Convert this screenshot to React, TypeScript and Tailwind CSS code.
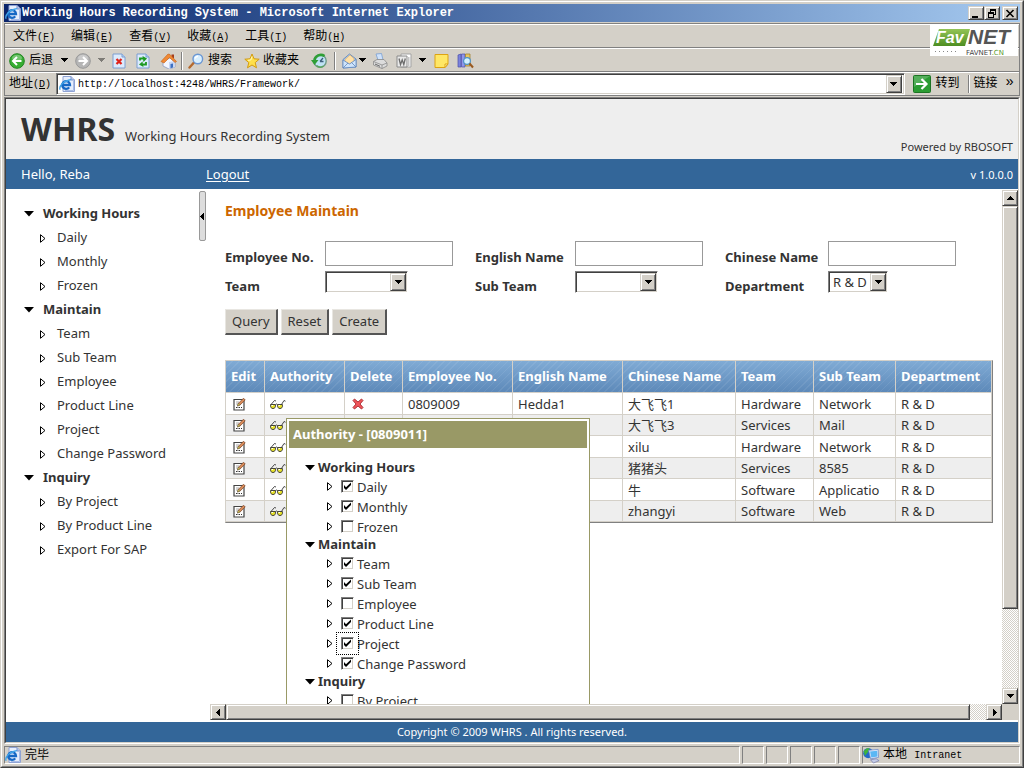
import { useState, type ReactNode } from 'react';

const FONT = 'font-["Noto_Sans","Noto_Sans_CJK_SC",sans-serif]';
const CHROME_FONT = 'font-["Liberation_Mono","Noto_Sans_CJK_SC",monospace]';

const RAISED =
  'border border-t-[#d4d0c8] border-l-[#d4d0c8] border-r-[#404040] border-b-[#404040] bg-[#d4d0c8] shadow-[inset_1px_1px_0_#fff,inset_-1px_-1px_0_#808080]';
const SUNKEN =
  'border border-t-[#808080] border-l-[#808080] border-r-white border-b-white bg-white shadow-[inset_1px_1px_0_#404040,inset_-1px_-1px_0_#d4d0c8]';
const DITHER = 'bg-[repeating-conic-gradient(#fff_0_25%,#d4d0c8_0_50%)] bg-[length:2px_2px]';

const MENUS = [
  ['文件', 'F'],
  ['编辑', 'E'],
  ['查看', 'V'],
  ['收藏', 'A'],
  ['工具', 'T'],
  ['帮助', 'H'],
];

const NAV = [
  { title: 'Working Hours', items: ['Daily', 'Monthly', 'Frozen'] },
  { title: 'Maintain', items: ['Team', 'Sub Team', 'Employee', 'Product Line', 'Project', 'Change Password'] },
  { title: 'Inquiry', items: ['By Project', 'By Product Line', 'Export For SAP'] },
];

const PERMISSIONS = [NAV[0], NAV[1], { title: 'Inquiry', items: ['By Project'] }];

const COLUMNS = [
  { label: 'Edit', width: 'w-[39px]' },
  { label: 'Authority', width: 'w-[80px]' },
  { label: 'Delete', width: 'w-[58px]' },
  { label: 'Employee No.', width: 'w-[110px]' },
  { label: 'English Name', width: 'w-[110px]' },
  { label: 'Chinese Name', width: 'w-[113px]' },
  { label: 'Team', width: 'w-[78px]' },
  { label: 'Sub Team', width: 'w-[82px]' },
  { label: 'Department', width: '' },
];

const EMPLOYEES = [
  { no: '0809009', en: 'Hedda1', cn: '大飞飞1', team: 'Hardware', sub: 'Network' },
  { no: '', en: '', cn: '大飞飞3', team: 'Services', sub: 'Mail' },
  { no: '', en: '', cn: 'xilu', team: 'Hardware', sub: 'Network' },
  { no: '', en: '', cn: '猪猪头', team: 'Services', sub: '8585' },
  { no: '', en: '', cn: '牛', team: 'Software', sub: 'Applicatio' },
  { no: '', en: '', cn: 'zhangyi', team: 'Software', sub: 'Web' },
];

/* ---------- icons ---------- */

function Arrow({ dir }: { dir: 'up' | 'down' | 'left' | 'right' }) {
  const d = {
    up: 'M0 5h7L3.5 1z',
    down: 'M0 1h7L3.5 5z',
    left: 'M5 0v7L1 3.5z',
    right: 'M2 0v7l4-3.5z',
  }[dir];
  return (
    <svg width="7" height="7" viewBox="0 0 7 7" className="shrink-0" aria-hidden="true">
      <path d={d} fill="#000" shapeRendering="crispEdges" />
    </svg>
  );
}

function OpenArrow() {
  return (
    <svg width="10" height="6" viewBox="0 0 10 6" className="shrink-0" aria-hidden="true">
      <path d="M0 0h10L5 5.5z" fill="#000" />
    </svg>
  );
}

function ClosedArrow() {
  return (
    <svg width="6" height="9" viewBox="0 0 6 9" className="shrink-0" aria-hidden="true">
      <path d="M.5 .7v7.6L5 4.5z" fill="#fff" stroke="#000" />
    </svg>
  );
}

function IEIcon() {
  return (
    <svg width="16" height="16" viewBox="0 0 16 16" className="shrink-0" aria-hidden="true">
      <path d="M4 .5h8L15.500 4v11.500H4z" fill="#e6eefc" stroke="#8fa3d4" />
      <path d="M12 .5V4h3.500" fill="#b5c8ee" stroke="#7f93c9" />
      <path d="M14.500 5v9.500H6" fill="none" stroke="#a9bce6" />
      <path d="M3.200 9h7.800a3.900 3.900 0 1 0-.8 2.400" fill="none" stroke="#1668c4" strokeWidth="2.300" />
      <path d="M4 7c1-1.600 3-2.200 4.600-1.600" fill="none" stroke="#6cc3f7" strokeWidth=".9" />
      <path d="M1.200 13.800C-.6 10.500 4.500 4.500 12 3.600" fill="none" stroke="#3fa3e8" strokeWidth="1.300" />
    </svg>
  );
}

function CircleArrowIcon({ forward }: { forward?: boolean }) {
  return (
    <svg width="16" height="16" viewBox="0 0 16 16" className="shrink-0" aria-hidden="true">
      <circle cx="8" cy="8" r="7.300" fill={forward ? '#b5b5b5' : '#37ad32'} stroke={forward ? '#999' : '#1f8420'} />
      <ellipse cx="8" cy="4.800" rx="5" ry="3" fill="#fff" opacity=".3" />
      <path
        d={forward ? 'M3.500 8h8M8 4l4 4-4 4' : 'M12.500 8h-8M8 4L4 8l4 4'}
        fill="none"
        stroke="#fff"
        strokeWidth="2"
      />
    </svg>
  );
}

function PageIcon({ children }: { children: ReactNode }) {
  return (
    <svg width="14" height="16" viewBox="0 0 14 16" className="shrink-0" aria-hidden="true">
      <path d="M1 1h9l3 3v11H1z" fill="#dcebfd" stroke="#7d9ed0" />
      <path d="M10 1v3h3" fill="#b9d0f2" stroke="#7d9ed0" />
      {children}
    </svg>
  );
}

function StopIcon() {
  return (
    <PageIcon>
      <path d="M4.500 6l5 5M9.500 6l-5 5" stroke="#e0231a" strokeWidth="2.200" />
    </PageIcon>
  );
}

function RefreshIcon() {
  return (
    <PageIcon>
      <path d="M4 7.500V5.500h3" fill="none" stroke="#1d9a22" strokeWidth="1.800" />
      <path d="M6.500 3l4.500 2.500L7.500 9z" fill="#1d9a22" />
      <path d="M10 9v2.500H7" fill="none" stroke="#1d9a22" strokeWidth="1.800" />
      <path d="M7.500 14L3 11.500 6.500 8.500z" fill="#1d9a22" />
    </PageIcon>
  );
}

function HomeIcon() {
  return (
    <svg width="17" height="16" viewBox="0 0 17 16" className="shrink-0" aria-hidden="true">
      <path d="M11.500 1.500h2.500v4h-2.500z" fill="#a33d1c" />
      <path d="M3 8l7-3 5 4v5l-6 2-6-3z" fill="#f3f6ff" stroke="#8d9bc0" strokeWidth=".8" />
      <path d="M9 9l6-1v6l-6 2z" fill="#c9d7f4" />
      <path d="M1 8.500L8 1l2 .5 6.500 7-1.500 1L9.500 4.500 4 10z" fill="#f08a35" stroke="#c25f18" strokeWidth=".6" />
      <path d="M10.500 11l2.500-.6v4.100l-2.500.8z" fill="#3d70c2" />
    </svg>
  );
}

function SearchIcon() {
  return (
    <svg width="16" height="16" viewBox="0 0 16 16" className="shrink-0" aria-hidden="true">
      <path d="M1.500 14.500L6 9.500" stroke="#b4692f" strokeWidth="2.400" strokeLinecap="round" />
      <circle cx="9.800" cy="6" r="4.800" fill="#d8efff" stroke="#6a97d3" strokeWidth="1.400" />
      <path d="M7 5.500C7.500 4 8.600 3.300 10 3.200" stroke="#fff" strokeWidth="1.400" fill="none" />
    </svg>
  );
}

function StarIcon() {
  return (
    <svg width="16" height="16" viewBox="0 0 16 16" className="shrink-0" aria-hidden="true">
      <path d="M8 1l2 4.800 5.200.4-4 3.400 1.300 5.200L8 12l-4.500 2.800 1.300-5.200-4-3.400L6 5.800z" fill="#ffe04a" stroke="#d29a12" />
      <path d="M8 3.500L6.800 7 4 7.300" fill="none" stroke="#fff8c4" />
    </svg>
  );
}

function HistoryIcon() {
  return (
    <svg width="16" height="16" viewBox="0 0 16 16" className="shrink-0" aria-hidden="true">
      <circle cx="9" cy="8" r="6.200" fill="#bfe3f5" stroke="#6f9a86" strokeWidth="1.400" />
      <path d="M9 8.500l3-3.500M9 8.500h3.500" stroke="#3e5f7c" strokeWidth="1.300" />
      <path d="M13.500 3A6.500 6.500 0 0 0 3.500 7" fill="none" stroke="#2f9e35" strokeWidth="2.600" />
      <path d="M0 7h7.500L3.500 12z" fill="#2f9e35" />
      <path d="M5.500 12.500c2 1.700 5 2 7 .5" fill="none" stroke="#5aa55c" strokeWidth="1.500" />
    </svg>
  );
}

function MailIcon() {
  return (
    <svg width="15" height="16" viewBox="0 0 15 16" className="shrink-0" aria-hidden="true">
      <path d="M1 6.500L7.500 1 14 6v8L1 15z" fill="#a9cbf3" stroke="#6288bd" strokeWidth=".9" />
      <path d="M3 6.500L8 2l4 3.500V9l-4.500 2L3 9z" fill="#ffe0a6" stroke="#d9a65a" strokeWidth=".6" />
      <path d="M1 7l6.500 4L14 6.500V14L1 15z" fill="#cfe4fb" stroke="#6288bd" strokeWidth=".8" />
      <path d="M1 15l5-5M14 14L9.500 9.500" stroke="#6288bd" strokeWidth=".8" />
    </svg>
  );
}

function PrintIcon() {
  return (
    <svg width="16" height="16" viewBox="0 0 16 16" className="shrink-0" aria-hidden="true">
      <path d="M4 1l5.500-.5L11 7H6z" fill="#cfe2fb" stroke="#7a9fd2" strokeWidth=".8" />
      <path d="M1.500 8.500L5 6.500h7l3 3.500v3l-5 2.500L1.500 12z" fill="#dcdcdc" stroke="#8a8a8a" strokeWidth=".8" />
      <path d="M1.500 8.500L10 12l5-2M10 12v3.500" fill="none" stroke="#8a8a8a" strokeWidth=".8" />
      <path d="M3 11l5 2.300" stroke="#666" />
    </svg>
  );
}

function WordIcon() {
  return (
    <svg width="16" height="16" viewBox="0 0 16 16" className="shrink-0" aria-hidden="true">
      <path d="M5 1h10v13H5z" fill="#fff" stroke="#a3a3a3" />
      <path d="M12.500 4v9M14 4v9" stroke="#c4c4c4" />
      <path d="M1 3h10v11H1z" fill="#e9e9e9" stroke="#8b8b8b" />
      <path d="M3 5.500l1.500 6L6.200 7l1.600 4.500 1.500-6" fill="none" stroke="#6d6d6d" strokeWidth="1.300" />
    </svg>
  );
}

function NoteIcon() {
  return (
    <svg width="15" height="16" viewBox="0 0 15 16" className="shrink-0" aria-hidden="true">
      <path d="M1 1.500h13V11l-3 3.500H1z" fill="#ffe766" stroke="#dda313" />
      <path d="M11 14.500V11h3z" fill="#fff6bd" stroke="#dda313" />
    </svg>
  );
}

function ResearchIcon() {
  return (
    <svg width="17" height="16" viewBox="0 0 17 16" className="shrink-0" aria-hidden="true">
      <path d="M1 2l3-1v13H1z" fill="#7c83dd" stroke="#4a4fa8" strokeWidth=".7" />
      <path d="M4.500 1H8v13H4.500z" fill="#9097ea" stroke="#4a4fa8" strokeWidth=".7" />
      <path d="M8.500 1H13v12H8.500z" fill="#e7c765" stroke="#9b7a22" strokeWidth=".7" />
      <circle cx="10" cy="8" r="3.400" fill="#d3f1ff" stroke="#4f93c4" strokeWidth="1.200" />
      <path d="M12.500 10.500l3.500 4" stroke="#9a5a20" strokeWidth="2" />
    </svg>
  );
}

function GoIcon() {
  return (
    <svg width="18" height="18" viewBox="0 0 18 18" className="shrink-0" aria-hidden="true">
      <rect x=".5" y=".5" width="17" height="17" rx="1" fill="#2b9c33" stroke="#1d7424" />
      <path d="M1 1h16L1 12z" fill="#fff" opacity=".2" />
      <path d="M3 9h10M8.500 4l5 5-5 5" fill="none" stroke="#fff" strokeWidth="2.200" />
    </svg>
  );
}

function IntranetIcon() {
  return (
    <svg width="17" height="17" viewBox="0 0 18 17" className="shrink-0" aria-hidden="true">
      <circle cx="5.500" cy="6" r="5.300" fill="#2468c8" />
      <path d="M1 4c2-4 6-3 6-3L5 5 2 9z" fill="#3fb53a" />
      <path d="M6 3l10-1 .5 8.500L8 12z" fill="#e4ecfb" stroke="#7089c4" strokeWidth=".8" />
      <path d="M7.500 4.300L15 3.500l.4 6-6.600 1z" fill="#5bb7f4" />
      <path d="M8 13l6-1 3 2-6 2.500z" fill="#c4cbe6" stroke="#7078a8" strokeWidth=".7" />
    </svg>
  );
}

function EditIcon() {
  return (
    <svg width="13" height="14" viewBox="0 0 13 14" aria-hidden="true">
      <path d="M1 2.500h10V13H1z" fill="#fff" stroke="#444" strokeWidth="1.200" />
      <path d="M3 5h3M3 7h2" stroke="#aaa" />
      <path d="M3 10.500h6" stroke="#333" strokeDasharray="1.500 1" />
      <path d="M4.500 9l1-2.800 5-5 1.700 1.700-5 5z" fill="#d98b5a" stroke="#7a4526" strokeWidth=".7" />
      <path d="M4.500 9l1-2.800 1.700 1.700z" fill="#f2e542" stroke="#555" strokeWidth=".5" />
    </svg>
  );
}

function GlassesIcon() {
  return (
    <svg width="16" height="10" viewBox="0 0 16 10" aria-hidden="true">
      <path d="M.6 5.500h4.800v2.300L4.200 9.400H1.800L.6 7.800zM7.600 5.500h4.800v2.300l-1.200 1.600H8.800L7.600 7.800z" fill="#e9e42c" stroke="#333" strokeWidth=".9" />
      <path d="M1.500 6.500h1.500M8.500 6.500H10" stroke="#fff" />
      <path d="M1 5.500l3.500-4L6 2M5.300 6l1.200-1 1.200 1M11.500 5.500l2.500-4 1.500.7" fill="none" stroke="#333" strokeWidth=".9" />
    </svg>
  );
}

function DeleteIcon() {
  return (
    <svg width="12" height="12" viewBox="0 0 12 12" aria-hidden="true">
      <path d="M2.500 1L6 4l3.500-3L11 2.500 8 6l3 3.500L9.500 11 6 8l-3.500 3L1 9.500 4 6 1 2.500z" fill="#f0555a" stroke="#a5262c" strokeWidth=".9" />
    </svg>
  );
}

function FavNetLogo() {
  return (
    <svg width="88" height="31" viewBox="0 0 88 31" aria-label="FavNET">
      <defs>
        <linearGradient id="fav" x1="0" y1="0" x2="0" y2="1">
          <stop offset="0" stopColor="#93c456" />
          <stop offset="1" stopColor="#4d8e22" />
        </linearGradient>
      </defs>
      <rect width="88" height="31" fill="#fff" />
      <path d="M9 4h31l-5 17H3z" fill="url(#fav)" />
      <text x="6" y="18" fontFamily="Liberation Sans" fontSize="16" fontWeight="bold" fontStyle="italic" fill="#fff">Fav</text>
      <text x="38" y="19" fontFamily="Liberation Sans" fontSize="21" fontWeight="bold" fontStyle="italic" fill="#555">NET</text>
      <path d="M5 26.500h22" stroke="#888" strokeDasharray="1 3" />
      <text x="36" y="30" fontFamily="DejaVu Sans" fontSize="7" fill="#444">
        FAVNET<tspan fill="#5c9a2c">.CN</tspan>
      </text>
    </svg>
  );
}

/* ---------- browser chrome ---------- */

function TitleBar() {
  const button = `${RAISED} flex h-[14px] w-4 items-center justify-center`;
  return (
    <div className="flex h-[18px] items-center bg-linear-to-r from-[#0a246a] to-[#a6caf0] pl-px pr-[2px]">
      <IEIcon />
      <h1 className="flex-1 truncate pt-px pl-px text-[12px] leading-[17px] font-bold text-white">
        Working Hours Recording System - Microsoft Internet Explorer
      </h1>
      <button className={button} aria-label="Minimize">
        <svg width="10" height="9" viewBox="0 0 10 9"><path d="M1 7h6v2H1z" /></svg>
      </button>
      <button className={button} aria-label="Restore">
        <svg width="10" height="9" viewBox="0 0 10 9" fill="none" stroke="#000" shapeRendering="crispEdges">
          <path d="M3.500 3V.5h5v5H7M3 1.500h6M1.500 3.500h5v5h-5zM1 4.500h6" />
        </svg>
      </button>
      <button className={`${button} ml-[2px]`} aria-label="Close">
        <svg width="10" height="9" viewBox="0 0 10 9"><path d="M1.500 1l7 7M8.500 1l-7 7" stroke="#000" strokeWidth="1.600" /></svg>
      </button>
    </div>
  );
}

function Separator() {
  return <span className="h-[18px] w-[2px] shrink-0 border-l border-[#808080] bg-white" />;
}

function Toolbar() {
  return (
    <div className="flex h-6 items-center border-t border-b border-t-white border-b-[#808080] pt-px pl-1 text-[12px]">
      <button className="flex items-center gap-1"><CircleArrowIcon />后退</button>
      <button className="ml-2 w-[14px]" aria-label="Back list"><Arrow dir="down" /></button>
      <button aria-label="Forward"><CircleArrowIcon forward /></button>
      <button className="ml-[7px] w-[14px] opacity-40" aria-label="Forward list"><Arrow dir="down" /></button>
      <button aria-label="Stop"><StopIcon /></button>
      <button className="ml-[10px]" aria-label="Refresh"><RefreshIcon /></button>
      <button className="mr-1 ml-[10px]" aria-label="Home"><HomeIcon /></button>
      <Separator />
      <button className="ml-[5px] flex items-center gap-1"><SearchIcon />搜索</button>
      <button className="ml-3 flex items-center gap-[3px]"><StarIcon />收藏夹</button>
      <button className="mr-[7px] ml-3" aria-label="History"><HistoryIcon /></button>
      <Separator />
      <button className="ml-[6px] flex items-center gap-[2px]" aria-label="Mail"><MailIcon /><Arrow dir="down" /></button>
      <button className="ml-[6px]" aria-label="Print"><PrintIcon /></button>
      <button className="ml-2 flex items-center gap-[7px]" aria-label="Edit with Word"><WordIcon /><Arrow dir="down" /></button>
      <button className="ml-2" aria-label="Notes"><NoteIcon /></button>
      <button className="ml-2" aria-label="Research"><ResearchIcon /></button>
    </div>
  );
}

function AddressBar() {
  return (
    <form className="flex h-6 items-center border-t border-b border-t-white border-b-[#808080] pl-1 text-[12px]" onSubmit={e => e.preventDefault()}>
      <label htmlFor="address" className="w-[47px] shrink-0">
        地址<span className="text-[10px]">(<u>D</u>)</span>
      </label>
      <div className={`${SUNKEN} flex h-[22px] min-w-0 flex-1 items-center gap-[3px] p-[2px]`}>
        <IEIcon />
        <input id="address" className="h-4 min-w-0 flex-1 pt-px text-[10px] outline-none" defaultValue="http://localhost:4248/WHRS/Framework/" />
        <button type="button" aria-label="Address list" className={`${RAISED} flex h-[18px] w-4 items-center justify-center`}>
          <Arrow dir="down" />
        </button>
      </div>
      <button className="mr-2 ml-2 flex items-center gap-[5px]"><GoIcon />转到</button>
      <Separator />
      <button type="button" className="ml-1">链接</button>
      <button type="button" className="mr-[5px] ml-2 pb-1 text-[14px] leading-4" aria-label="More links">»</button>
    </form>
  );
}

function StatusBar() {
  const pane = 'border border-t-[#808080] border-l-[#808080] border-r-white border-b-white';
  return (
    <footer className="mt-[2px] flex h-[18px] gap-[2px] text-[12px] leading-4">
      <div className={`${pane} flex flex-1 items-center gap-1`}><IEIcon /><span className="pt-px">完毕</span></div>
      {[0, 1, 2, 3, 4].map(i => (
        <div key={i} className={`${pane} w-[22px]`} />
      ))}
      <div className={`${pane} flex w-[158px] items-center gap-[3px]`}>
        <IntranetIcon />
        <span className="pt-px">本地 <span className="text-[10px]">Intranet</span></span>
      </div>
    </footer>
  );
}

function ScrollButton({ dir }: { dir: 'up' | 'down' | 'left' | 'right' }) {
  return (
    <button aria-label={`Scroll ${dir}`} className={`${RAISED} flex size-4 shrink-0 items-center justify-center`}>
      <Arrow dir={dir} />
    </button>
  );
}

/* ---------- application ---------- */

function Sidebar() {
  return (
    <nav className="w-[193px] shrink-0 pt-3 pl-[18px]">
      {NAV.map(group => (
        <section key={group.title}>
          <h2 className="flex h-6 items-center gap-[9px] font-bold"><OpenArrow />{group.title}</h2>
          <ul>
            {group.items.map(item => (
              <li key={item} className="flex h-6 items-center gap-[11px] pl-4">
                <ClosedArrow />
                <a href="#">{item}</a>
              </li>
            ))}
          </ul>
        </section>
      ))}
    </nav>
  );
}

function SelectBox({ id, options, width }: { id: string; options: string[]; width: string }) {
  return (
    <div className={`${SUNKEN} ${width} flex h-[22px] p-px`}>
      <div className="relative flex-1">
        <select id={id} className="block h-[18px] w-full appearance-none pl-[3px] leading-[18px] outline-none">
          {options.map(o => <option key={o}>{o}</option>)}
        </select>
        <span className={`${RAISED} pointer-events-none absolute inset-y-0 right-0 flex w-4 items-center justify-center`}>
          <Arrow dir="down" />
        </span>
      </div>
    </div>
  );
}

function SearchForm() {
  const label = 'self-end font-bold leading-[18px]';
  const input = 'h-[25px] w-32 border border-[#999] px-1 outline-none';
  const button = 'h-[26px] border-t border-l border-r-2 border-b-2 border-t-[#e8e6e1] border-l-[#e8e6e1] border-r-[#555] border-b-[#555] bg-[#d4d0c8] px-[6px]';
  return (
    <form onSubmit={e => e.preventDefault()}>
      <div className="grid grid-cols-[100px_150px_100px_150px_103px_auto] grid-rows-[25px_24px] items-start gap-y-[5px]">
        <label className={label} htmlFor="empNo">Employee No.</label>
        <input className={input} id="empNo" />
        <label className={label} htmlFor="enName">English Name</label>
        <input className={input} id="enName" />
        <label className={label} htmlFor="cnName">Chinese Name</label>
        <input className={input} id="cnName" />
        <label className={label} htmlFor="team">Team</label>
        <SelectBox id="team" options={['']} width="w-[83px]" />
        <label className={label} htmlFor="subTeam">Sub Team</label>
        <SelectBox id="subTeam" options={['']} width="w-[83px]" />
        <label className={label} htmlFor="dept">Department</label>
        <SelectBox id="dept" options={['R & D']} width="w-[60px]" />
      </div>
      <div className="mt-[14px] flex gap-[3px]">
        <button className={button}>Query</button>
        <button className={button} type="reset">Reset</button>
        <button className={button} type="button">Create</button>
      </div>
    </form>
  );
}

function EmployeeTable() {
  const cell = 'truncate border-r border-b border-[#d4d0c8] pl-[5px]';
  return (
    <table className="mt-[25px] w-full table-fixed border-separate border-spacing-0 border border-t-[#d4d0c8] border-l-[#d4d0c8] border-r-[#808080] border-b-[#808080] text-left">
      <thead>
        <tr className="h-8 bg-[repeating-linear-gradient(135deg,transparent_0_4px,#ffffff12_4px_5px),linear-gradient(#80abd5,#5c88b8)] text-white">
          {COLUMNS.map(c => (
            <th key={c.label} className={`${cell} ${c.width} font-bold`}>{c.label}</th>
          ))}
        </tr>
      </thead>
      <tbody>
        {EMPLOYEES.map(e => (
          <tr key={e.cn} className="leading-[18px] odd:h-[22px] even:h-[21px] even:bg-[#eee]">
            <td className={`${cell} pl-[7px]`}><button className="block" aria-label="Edit"><EditIcon /></button></td>
            <td className={cell}><button className="block" aria-label="Authority"><GlassesIcon /></button></td>
            <td className={`${cell} pl-[7px]`}><button className="block" aria-label="Delete"><DeleteIcon /></button></td>
            <td className={cell}>{e.no}</td>
            <td className={cell}>{e.en}</td>
            <td className={cell}>{e.cn}</td>
            <td className={cell}>{e.team}</td>
            <td className={cell}>{e.sub}</td>
            <td className={cell}>R &amp; D</td>
          </tr>
        ))}
      </tbody>
    </table>
  );
}

function AuthorityDialog() {
  const [granted, setGranted] = useState(['Daily', 'Monthly', 'Team', 'Sub Team', 'Product Line', 'Project', 'Change Password']);

  const toggle = (item: string) =>
    setGranted(prev => (prev.includes(item) ? prev.filter(i => i !== item) : [...prev, item]));

  return (
    <div role="dialog" aria-label="Authority" className="absolute top-[228px] left-[76px] w-[304px] border border-[#996] bg-white p-[2px]">
      <h2 className="h-[27px] bg-[#996] pl-1 leading-[27px] font-bold text-white">Authority - [0809011]</h2>
      <div className="pt-[11px] pb-6 pl-4">
        {PERMISSIONS.map(group => (
          <section key={group.title}>
            <h3 className="flex h-[17px] items-center gap-[3px] font-bold"><OpenArrow />{group.title}</h3>
            {group.items.map(item => (
              <div key={item} className="flex h-5 items-center pl-[22px]">
                <ClosedArrow />
                <label className="flex items-center gap-[3px] pl-2">
                  <span className="relative size-[13px]">
                    <input
                      type="checkbox"
                      checked={granted.includes(item)}
                      onChange={() => toggle(item)}
                      className={`${SUNKEN} peer block size-[13px] appearance-none outline-1 outline-offset-4 outline-black ${item === 'Project' ? 'outline-dotted' : 'outline-none'}`}
                    />
                    <svg viewBox="0 0 13 13" className="pointer-events-none absolute inset-0 hidden peer-checked:block" aria-hidden="true">
                      <path d="M3 5v3l2 2 5-5V2.500L5 7.200z" fill="#000" />
                    </svg>
                  </span>
                  <span className="pt-[2px] leading-[18px]">{item}</span>
                </label>
              </div>
            ))}
          </section>
        ))}
      </div>
    </div>
  );
}

function Workspace() {
  return (
    <div className="grid min-h-0 min-w-0 flex-1 grid-cols-[minmax(0,1fr)_16px] grid-rows-[minmax(0,1fr)_16px]">
      <main className="relative overflow-hidden pr-[9px] pl-[15px]">
        <h2 className="pt-[11px] text-[14px] leading-5 font-bold text-[#c60]">Employee Maintain</h2>
        <div className="mt-5"><SearchForm /></div>
        <EmployeeTable />
        <AuthorityDialog />
      </main>
      <div className={`${DITHER} flex flex-col`}>
        <ScrollButton dir="up" />
        <div className={`${RAISED} flex-[403]`} />
        <div className="flex-[79]" />
        <ScrollButton dir="down" />
      </div>
      <div className={`${DITHER} flex`}>
        <ScrollButton dir="left" />
        <div className={`${RAISED} flex-[744]`} />
        <div className="flex-[16]" />
        <ScrollButton dir="right" />
      </div>
      <div className="bg-[#d4d0c8]" />
    </div>
  );
}

function WhrsPage() {
  return (
    <div className={`${FONT} flex min-h-0 flex-1 flex-col bg-white text-[13px] text-[#333]`}>
      <header className="flex h-[60px] shrink-0 items-end justify-between bg-[#eee] pr-[5px] pl-[15px]">
        <div className="flex items-baseline gap-[10px] pb-[9px]">
          <span className="text-[32px] leading-[42px] font-bold">WHRS</span>
          <span>Working Hours Recording System</span>
        </div>
        <span className="pb-[3px] text-[11px] leading-[18px]">Powered by RBOSOFT</span>
      </header>
      <div className="flex h-[30px] shrink-0 items-center bg-[#369] pt-[2px] pr-[5px] pl-[15px] text-white">
        <span className="w-[185px]">Hello, Reba</span>
        <a href="#" className="flex-1 underline underline-offset-2">Logout</a>
        <span className="text-[11px]">v 1.0.0.0</span>
      </div>
      <div className="flex min-h-0 flex-1 pt-px">
        <Sidebar />
        <div className="w-[11px] shrink-0 pt-px">
          <button aria-label="Collapse menu" className="flex h-[50px] w-[7px] items-center justify-center rounded-xs border border-[#999] bg-[#ddd]">
            <Arrow dir="left" />
          </button>
        </div>
        <Workspace />
      </div>
      <div className="mt-[2px] h-5 shrink-0 bg-[#369] text-center text-[11px] leading-5 text-white">
        Copyright © 2009 WHRS . All rights reserved.
      </div>
    </div>
  );
}

export default function App() {
  return (
    <div className="h-screen min-h-[600px] border border-t-[#d4d0c8] border-l-[#d4d0c8] border-r-[#404040] border-b-[#404040]">
      <div className={`${CHROME_FONT} relative flex h-full flex-col border border-t-white border-l-white border-r-[#808080] border-b-[#808080] bg-[#d4d0c8] p-[2px] text-black`}>
        <TitleBar />
        <div className="mt-px border-t border-r border-l border-[#808080]">
          <div className="flex h-6 items-center gap-4 border-t border-b border-t-white border-b-[#808080] pt-[2px] pl-2">
            {MENUS.map(([name, key]) => (
              <button key={key} className="text-[12px]">
                {name}<span className="text-[10px]">(<u>{key}</u>)</span>
              </button>
            ))}
          </div>
          <Toolbar />
          <AddressBar />
        </div>
        <div className="absolute top-[23px] right-1"><FavNetLogo /></div>
        <div className="mt-px flex min-h-0 flex-1 flex-col border-t border-r border-b border-l border-t-[#808080] border-r-white border-b-white border-l-[#808080]">
          <div className="flex min-h-0 flex-1 flex-col border border-t-[#404040] border-r-[#d4d0c8] border-b-[#d4d0c8] border-l-[#404040]">
            <WhrsPage />
          </div>
        </div>
        <StatusBar />
      </div>
    </div>
  );
}
